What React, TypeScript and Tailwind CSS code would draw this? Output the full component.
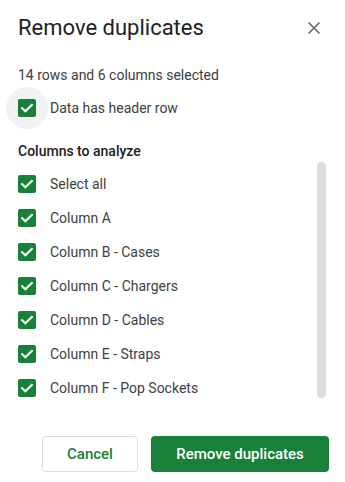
import React from "react";

const Check = () => (
  <div className="w-[18px] h-[18px] rounded-[2px] bg-[#188038] flex items-center justify-center shrink-0">
    <svg width="18" height="18" viewBox="0 0 18 18" fill="none">
      <path d="M4.2 9.2 L7.4 12.3 L13.8 5.9" stroke="white" strokeWidth="2.1" strokeLinecap="square" />
    </svg>
  </div>
);

const cols = [
  "Select all",
  "Column A",
  "Column B - Cases",
  "Column C - Chargers",
  "Column D - Cables",
  "Column E - Straps",
  "Column F - Pop Sockets",
];

export default function App() {
  return (
    <div className="w-[345px] h-[482px] bg-white overflow-hidden" style={{ fontFamily: "Roboto, 'Noto Sans', sans-serif" }}>
      <div className="flex items-center justify-between pt-[14px] pl-[18px] pr-[24px]">
        <div className="text-[22px] leading-[28px] text-[#202124]">Remove duplicates</div>
        <svg width="14" height="14" viewBox="0 0 14 14" fill="none">
          <path d="M1.5 1.5 L12.5 12.5 M12.5 1.5 L1.5 12.5" stroke="#5f6368" strokeWidth="1.5" />
        </svg>
      </div>
      <div className="pl-[18px] mt-[23px] text-[14px] leading-[20px] text-[#3c4043]">14 rows and 6 columns selected</div>
      <div className="pl-[18px] mt-[6px] h-[34px] flex items-center gap-[14px] text-[14px] text-[#3c4043]">
        <div className="relative flex items-center justify-center">
          <div className="absolute w-[42px] h-[42px] rounded-full bg-[#f0f3f1]" />
          <div className="relative"><Check /></div>
        </div>
        <span>Data has header row</span>
      </div>
      <div className="pl-[18px] mt-[16px] text-[14px] leading-[20px] font-medium text-[#202124]">Columns to analyze</div>
      <div className="flex items-start mt-[1px] pl-[18px] pr-[19px]">
        <div className="flex-1 pt-[5px] flex flex-col">
          {cols.map((c) => (
            <div key={c} className="h-[34px] flex items-center gap-[14px] text-[14px] text-[#3c4043]">
              <Check />
              <span>{c}</span>
            </div>
          ))}
        </div>
        <div className="w-[9px] h-[236px] rounded-full bg-[#dadce0]" />
      </div>
      <div className="flex justify-end gap-[13px] mt-[31px] pr-[16px]">
        <button className="w-[96px] h-[36px] rounded-[4px] border border-[#dadce0] text-[#188038] text-[15px] font-medium bg-white">Cancel</button>
        <button className="w-[178px] h-[36px] rounded-[4px] bg-[#188038] text-white text-[15px] font-medium">Remove duplicates</button>
      </div>
    </div>
  );
}
